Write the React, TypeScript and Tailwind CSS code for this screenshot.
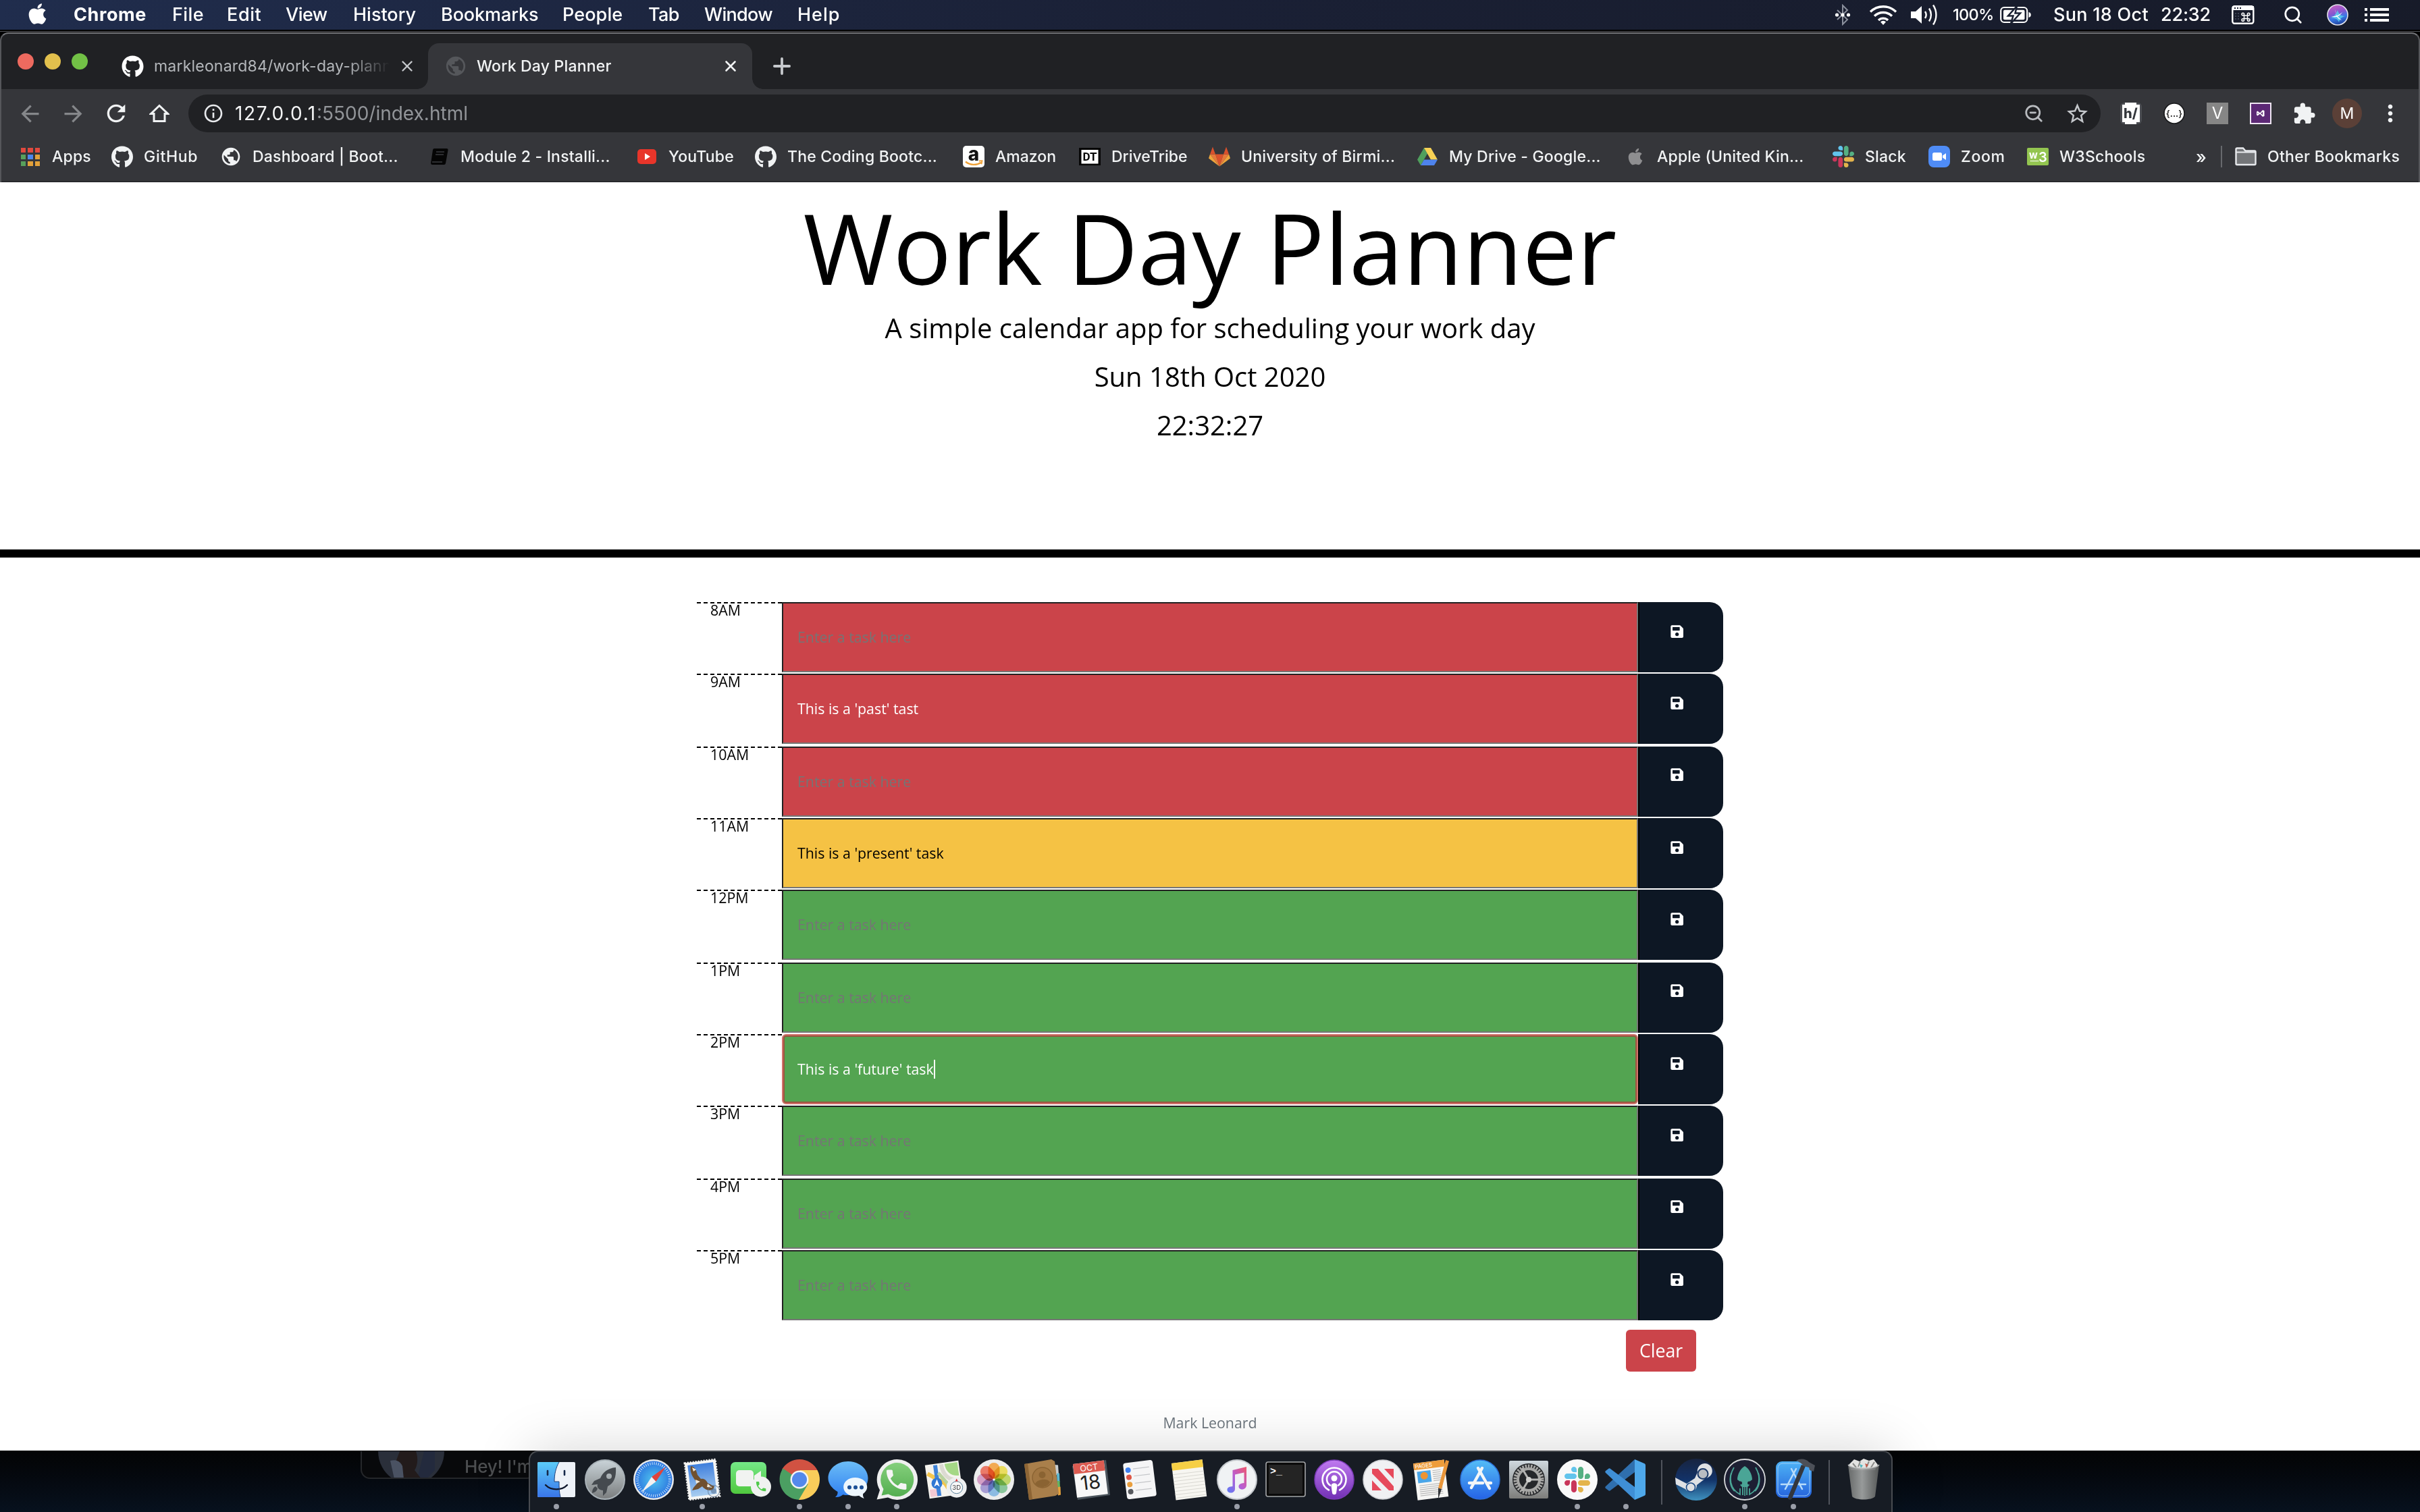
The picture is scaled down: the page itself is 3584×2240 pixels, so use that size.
import type { ReactNode } from "react";
import { FaApple, FaGithub, FaSave } from "react-icons/fa";
import {
  MdArrowBack,
  MdArrowForward,
  MdExtension,
  MdInfoOutline,
  MdMoreVert,
  MdPublic,
  MdRefresh,
  MdStarBorder,
} from "react-icons/md";
import { Plus, Search, X, ZoomOut } from "lucide-react";

const PHONE =
  "M6.62 10.79c1.44 2.83 3.76 5.14 6.59 6.59l2.2-2.2c.27-.27.67-.36 1.02-.24 1.12.37 2.33.57 3.57.57.55 0 1 .45 1 1V20c0 .55-.45 1-1 1-9.39 0-17-7.61-17-17 0-.55.45-1 1-1h3.5c.55 0 1 .45 1 1 0 1.25.2 2.45.57 3.57.11.35.03.74-.25 1.02l-2.2 2.2z";

/* ---------- macOS menu bar ---------- */

const menus = [
  { label: "Chrome", cls: "w-[146px] font-bold tracking-[0.6px]" },
  { label: "File", cls: "w-[81px] tracking-[0.4px]" },
  { label: "Edit", cls: "w-[87px] tracking-[0.6px]" },
  { label: "View", cls: "w-[100px] tracking-[-0.5px]" },
  { label: "History", cls: "w-[130px]" },
  { label: "Bookmarks", cls: "w-[180px] tracking-[-0.1px]" },
  { label: "People", cls: "w-[127px] tracking-[0.1px]" },
  { label: "Tab", cls: "w-[83px] tracking-[-0.6px]" },
  { label: "Window", cls: "w-[138px] tracking-[-0.7px]" },
  { label: "Help", cls: "w-[90px] tracking-[1px]" },
];

function Bluetooth() {
  return (
    <svg width="24" height="32" viewBox="0 0 24 32" fill="none">
      <path d="M4 9 19 23 12 30V2l7 7L4 23" stroke="#8a8f9c" strokeWidth="2" />
      <circle cx="3.5" cy="16" r="2.6" fill="#fff" />
      <circle cx="12" cy="16" r="2.6" fill="#fff" />
      <circle cx="20.500" cy="16" r="2.6" fill="#fff" />
    </svg>
  );
}

function Wifi() {
  return (
    <svg width="42" height="32" viewBox="0 0 42 32" fill="none" stroke="#fff" strokeWidth="3.4">
      <path d="M2 11.500a27 27 0 0 1 38 0" />
      <path d="M8 17.800a18.500 18.500 0 0 1 26 0" />
      <path d="M14 24a10 10 0 0 1 14 0" />
      <path d="M21 31l-4-4.500a5.500 5.500 0 0 1 8 0z" fill="#fff" stroke="none" />
    </svg>
  );
}

function Volume() {
  return (
    <svg width="42" height="34" viewBox="0 0 42 34" fill="none" stroke="#fff" strokeWidth="2.4">
      <path d="M0 12h7l9-8v26l-9-8H0z" fill="#fff" stroke="none" />
      <path d="M21 12a9 9 0 0 1 0 10" />
      <path d="M27 7.500a17 17 0 0 1 0 19" />
      <path d="M33 2.500a26 26 0 0 1 0 29" />
    </svg>
  );
}

function Battery() {
  return (
    <svg width="46" height="26" viewBox="0 0 46 26">
      <rect x="1.200" y="2" width="39" height="22" rx="5" fill="none" stroke="#fff" strokeWidth="2.200" />
      <rect x="5" y="5.800" width="31.500" height="14.500" rx="2" fill="#fff" />
      <path d="M42.500 9v8c2.500-.6 3.300-2.200 3.300-4s-.8-3.400-3.300-4z" fill="#fff" />
      <path d="M25 0 12 14.500h7.500L16 26l14-15.500h-7.500z" fill="#fff" stroke="#1a2031" strokeWidth="2.500" />
    </svg>
  );
}

function WindowGlyph() {
  return (
    <svg width="34" height="28" viewBox="0 0 34 28">
      <rect x="1.300" y="1.300" width="31" height="25.400" rx="3" fill="none" stroke="#fff" strokeWidth="2.400" />
      <path d="M1 1h32v6H1z" fill="#fff" />
      <path d="M4 3h2v2H4zM8 3h2v2H8zM12 3h2v2h-2z" fill="#1a2031" />
      <path d="M6 11v12M10 11v12" stroke="#4b5263" strokeWidth="1.500" strokeDasharray="2 2" />
      <g fill="none" stroke="#fff" strokeWidth="1.500">
        <rect x="18.500" y="15" width="5" height="4.500" />
        <circle cx="16.800" cy="13" r="1.800" />
        <circle cx="25.200" cy="13" r="1.800" />
        <circle cx="16.800" cy="21.500" r="1.800" />
        <circle cx="25.200" cy="21.500" r="1.800" />
      </g>
    </svg>
  );
}

function Siri() {
  return (
    <svg width="32" height="32" viewBox="0 0 32 32">
      <defs>
        <linearGradient id="siri" x1="0.300" y1="0" x2="0.600" y2="1">
          <stop offset="0" stopColor="#c65fc0" />
          <stop offset=".4" stopColor="#8a55cf" />
          <stop offset=".65" stopColor="#3a7ae6" />
          <stop offset="1" stopColor="#1c3f9c" />
        </linearGradient>
      </defs>
      <circle cx="16" cy="16" r="15" fill="url(#siri)" stroke="#e4e6ee" strokeWidth="1.600" />
      <path d="M5 21c5-2 8-5 11-12 2 7 6 9 11 9-5 1-8 4-9 9-2-5-6-7-13-6z" fill="#58d5ee" fillOpacity=".8" />
      <path d="M13 8c-1 6 1 9 9 16-5-2-9-4-9-16zM6 18c7 1 11-1 17-6-4 6-9 9-17 6z" fill="#fff" />
    </svg>
  );
}

function MenuBar() {
  return (
    <div className="flex h-[44px] items-center bg-linear-to-r from-[#202d4d] via-[#1a2035] to-[#171b29] text-[27px] font-medium text-white">
      <div className="flex w-[109px] pb-1 pl-[38px]">
        <FaApple className="size-[35px]" />
      </div>
      {menus.map((m) => (
        <div key={m.label} className={m.cls}>
          {m.label}
        </div>
      ))}
      <div className="ml-auto flex items-center pr-[46px]">
        <div className="w-[51px]"><Bluetooth /></div>
        <div className="w-[62px]"><Wifi /></div>
        <div className="w-[62px]"><Volume /></div>
        <div className="w-[70px] text-[23.500px] tracking-[-0.7px]">100%</div>
        <div className="w-[79px]"><Battery /></div>
        <div className="w-[159px] tracking-[0.3px] whitespace-nowrap">Sun 18 Oct</div>
        <div className="w-[105px] tracking-[-0.2px]">22:32</div>
        <div className="w-[76px]"><WindowGlyph /></div>
        <div className="w-[65px]"><Search className="size-[30px]" strokeWidth={2.2} /></div>
        <div className="w-[56px]"><Siri /></div>
        <div className="flex w-[36px] flex-col gap-[4px]">
          {[0, 1, 2].map((i) => (
            <div key={i} className="flex gap-[4px]">
              <div className="size-[4px] bg-white" />
              <div className="h-[4px] w-[28px] bg-white" />
            </div>
          ))}
        </div>
      </div>
    </div>
  );
}

/* ---------- Browser chrome ---------- */

function TabStrip() {
  return (
    <div className="flex h-[82px] items-end pl-[24px] text-[23px]">
      <div className="flex gap-[16px] self-start pt-[29px]">
        <div className="size-[24px] rounded-full bg-[#ed6a5f]" />
        <div className="size-[24px] rounded-full bg-[#e2c04d]" />
        <div className="size-[24px] rounded-full bg-[#72c146]" />
      </div>
      <div className="ml-[30px] flex h-[68px] w-[474px] items-center pl-[20px]">
        <FaGithub className="size-[33px] shrink-0 text-white" />
        <div className="ml-[15px] w-[349px] shrink-0 overflow-hidden tracking-[0.2px] whitespace-nowrap text-[#b4b7bb] [mask-image:linear-gradient(90deg,#000_82%,transparent)]">
          markleonard84/work-day-planner
        </div>
        <X className="ml-[13px] size-[26px] shrink-0 text-[#c4c7cb]" strokeWidth={2.2} />
      </div>
      <div className="relative flex h-[68px] w-[480px] items-center rounded-t-[16px] bg-[#35363a] pl-[24px]">
        <div className="absolute bottom-0 left-[-16px] size-[16px] bg-[radial-gradient(circle_at_0_0,transparent_15.5px,#35363a_16px)]" />
        <div className="absolute right-[-16px] bottom-0 size-[16px] bg-[radial-gradient(circle_at_100%_0,transparent_15.5px,#35363a_16px)]" />
        <MdPublic className="size-[34px] text-[#55575b]" />
        <div className="ml-[14px] w-[363px] font-medium tracking-[0.2px] text-[#f1f3f4]">Work Day Planner</div>
        <X className="size-[26px] text-[#f1f3f4]" strokeWidth={2.4} />
      </div>
      <div className="ml-[25px] flex h-[68px] items-center">
        <Plus className="size-[38px] text-[#c6c9cd]" strokeWidth={2.4} />
      </div>
    </div>
  );
}

function ToolCell({ children }: { children: ReactNode }) {
  return <div className="flex w-[64px] shrink-0 items-center justify-center">{children}</div>;
}

function Toolbar() {
  return (
    <div className="flex h-[72px] items-center bg-[#35363a] pr-[10px] pl-[10px]">
      <ToolCell><MdArrowBack className="size-[39px] text-[#85878a]" /></ToolCell>
      <ToolCell><MdArrowForward className="size-[39px] text-[#85878a]" /></ToolCell>
      <ToolCell><MdRefresh className="size-[40px] text-[#f1f3f4]" /></ToolCell>
      <ToolCell>
        <svg width="30" height="30" viewBox="0 0 30 30" fill="none" stroke="#f1f3f4" strokeWidth="3">
          <path d="M2.500 15.500 15 3.500l12.500 12H23V26.500H7V15.500z" strokeLinejoin="miter" />
        </svg>
      </ToolCell>
      <div className="ml-[11px] flex h-[56px] w-[2832px] items-center rounded-full bg-[#202124] pr-[3px] pl-[21px]">
        <MdInfoOutline className="size-[32px] text-[#e8eaed]" />
        <div className="ml-[16px] flex-1 text-[28px]">
          <span className="tracking-[1.6px] text-[#f4f5f6]">127.0.0.1</span>
          <span className="text-[#929599]">:5500/index.html</span>
        </div>
        <ToolCell><ZoomOut className="size-[30px] text-[#b8bbbf]" strokeWidth={2.2} /></ToolCell>
        <ToolCell><MdStarBorder className="size-[37px] text-[#c4c7cb]" /></ToolCell>
      </div>
      <div className="w-[13px]" />
      <ToolCell>
        <svg width="32" height="32" viewBox="0 0 32 32">
          <rect width="32" height="32" rx="6" fill="#4b4d52" />
          <path d="M7 0h17v3h5v26h-5v3H7v-3H3V3h4z" fill="#fff" />
          <text x="5" y="23" fontSize="20" fontWeight="800" fontFamily="Inter" fill="#33363b">h/</text>
        </svg>
      </ToolCell>
      <ToolCell>
        <svg width="32" height="32" viewBox="0 0 32 32">
          <circle cx="16" cy="16" r="15" fill="#fff" stroke="#17181a" strokeWidth="1.600" />
          <text x="16" y="20.500" textAnchor="middle" fontSize="13" fontWeight="600" fontFamily="Inter" fill="#222">{"{...}"}</text>
        </svg>
      </ToolCell>
      <ToolCell>
        <div className="flex size-[32px] items-center justify-center bg-[#868686] text-[24px] text-white">V</div>
      </ToolCell>
      <ToolCell>
        <svg width="32" height="32" viewBox="0 0 32 32">
          <rect x="1" y="1" width="30" height="30" fill="#5c2875" stroke="#efe6f3" strokeWidth="2" />
          <path d="M10 13.500 11.500 12.500l3.500 2.800 4-4.300 2.500 1v8l-2.500 1-4-4.300-3.500 2.800L10 18.500zM11.500 14.800v2.400l1.300-1.200zM19 13.600 16.300 16 19 18.400z" fill="#fff" fillRule="evenodd" />
        </svg>
      </ToolCell>
      <ToolCell><MdExtension className="size-[35px] text-[#f1f3f4]" /></ToolCell>
      <ToolCell>
        <div className="flex size-[44px] items-center justify-center rounded-full bg-[#5b4037] text-[23px] text-white">M</div>
      </ToolCell>
      <ToolCell><MdMoreVert className="size-[40px] text-[#f1f3f4]" /></ToolCell>
    </div>
  );
}

function SlackMark({ size }: { size: number }) {
  return (
    <svg width={size} height={size} viewBox="0 0 122.8 122.8">
      <path fill="#c9365a" d="M25.800 77.600c0 7.100-5.800 12.900-12.900 12.900S0 84.700 0 77.600s5.800-12.900 12.900-12.900h12.900v12.900zm6.500 0c0-7.100 5.800-12.900 12.900-12.900s12.900 5.800 12.900 12.900v32.300c0 7.100-5.800 12.900-12.900 12.900s-12.900-5.800-12.900-12.900V77.600z" />
      <path fill="#62c4ec" d="M45.200 25.800c-7.100 0-12.900-5.800-12.900-12.900S38.100 0 45.200 0s12.900 5.800 12.900 12.900v12.900H45.200zm0 6.500c7.100 0 12.900 5.800 12.900 12.900s-5.800 12.900-12.900 12.900H12.900C5.800 58.100 0 52.300 0 45.200s5.800-12.900 12.900-12.900h32.300z" />
      <path fill="#55b083" d="M97 45.200c0-7.100 5.800-12.900 12.900-12.900s12.900 5.800 12.900 12.900-5.800 12.900-12.900 12.900H97V45.200zm-6.500 0c0 7.100-5.800 12.900-12.900 12.900s-12.900-5.800-12.900-12.900V12.900C64.700 5.800 70.500 0 77.600 0s12.900 5.800 12.900 12.900v32.300z" />
      <path fill="#e4b44c" d="M77.600 97c7.100 0 12.900 5.800 12.900 12.900s-5.800 12.900-12.900 12.900-12.900-5.800-12.900-12.900V97h12.900zm0-6.500c-7.100 0-12.900-5.800-12.900-12.900s5.800-12.900 12.900-12.900h32.300c7.100 0 12.900 5.800 12.900 12.900s-5.800 12.900-12.900 12.900H77.600z" />
    </svg>
  );
}

const appColors = ["#e0493e", "#e0493e", "#e0493e", "#58a05c", "#4d86ec", "#e2a13a", "#58a05c", "#e2a13a", "#e2a13a"];

const bookmarks: { label: string; cls: string; icon: ReactNode }[] = [
  {
    label: "Apps",
    cls: "w-[136px]",
    icon: (
      <div className="grid w-[28px] grid-cols-3 gap-[3px]">
        {appColors.map((c, i) => (
          <div key={i} className="h-[7px]" style={{ backgroundColor: c }} />
        ))}
      </div>
    ),
  },
  { label: "GitHub", cls: "w-[161px] tracking-[0.7px]", icon: <FaGithub className="size-[33px]" /> },
  { label: "Dashboard | Boot...", cls: "w-[308px]", icon: <MdPublic className="size-[34px]" /> },
  {
    label: "Module 2 - Installi...",
    cls: "w-[308px]",
    icon: (
      <svg width="32" height="32" viewBox="0 0 32 32">
        <path d="M9 4h18.500a2 2 0 0 1 2 2.500L26 26a2.500 2.500 0 0 1-2.500 2H6.500a2.500 2.500 0 0 1-2.300-3L7 6a2.500 2.500 0 0 1 2-2z" fill="#050505" />
        <path d="M12 9h12M11 13h12M6 24h15" stroke="#3a3b3f" strokeWidth="1.500" />
      </svg>
    ),
  },
  {
    label: "YouTube",
    cls: "w-[176px] tracking-[-0.1px]",
    icon: (
      <svg width="32" height="32" viewBox="0 0 32 32">
        <rect x="2" y="5" width="28" height="22" rx="5" fill="#e8352a" />
        <path d="m13 11 8 5-8 5z" fill="#fff" />
      </svg>
    ),
  },
  { label: "The Coding Bootc...", cls: "w-[308px]", icon: <FaGithub className="size-[33px]" /> },
  {
    label: "Amazon",
    cls: "w-[172px] tracking-[0px]",
    icon: (
      <svg width="32" height="32" viewBox="0 0 32 32">
        <rect width="32" height="32" rx="5" fill="#fff" />
        <text x="16" y="21.500" textAnchor="middle" fontSize="28" fontWeight="800" fontFamily="Inter" fill="#111">a</text>
        <path d="M4 23.500c7 5.500 16 5.800 23 1.200" fill="none" stroke="#f0a136" strokeWidth="2.400" />
        <path d="M24 22.500l4.500-.3-1 5" fill="none" stroke="#f0a136" strokeWidth="1.800" />
      </svg>
    ),
  },
  {
    label: "DriveTribe",
    cls: "w-[192px] tracking-[0px]",
    icon: (
      <svg width="32" height="32" viewBox="0 0 32 32">
        <rect y="3" width="32" height="26" fill="#060606" />
        <rect x="3.500" y="6" width="25" height="20.500" fill="#fff" />
        <text x="16" y="22.300" textAnchor="middle" fontSize="17" fontWeight="700" fontFamily="Roboto" fill="#060606">DT</text>
      </svg>
    ),
  },
  {
    label: "University of Birmi...",
    cls: "w-[308px] tracking-[0.1px]",
    icon: (
      <svg width="32" height="32" viewBox="0 0 32 32">
        <path d="m16 30.500 6-18H10z" fill="#d9512c" />
        <path d="M16 30.500 10 12.500H2zM16 30.500l6-18h8z" fill="#e8783a" />
        <path d="m2 12.500-2 6 16 12zM30 12.500l2 6-16 12z" fill="#eda53d" />
        <path d="M2 12.500h8L6 1.500zM30 12.500h-8l4-11z" fill="#d9512c" />
      </svg>
    ),
  },
  {
    label: "My Drive - Google...",
    cls: "w-[308px]",
    icon: (
      <svg width="32" height="32" viewBox="0 0 32 32">
        <path d="M11 3 1 20.500 6 29l10-17.500z" fill="#4f9f5d" />
        <path d="M11 3h10l10 17.500H21z" fill="#f7d155" />
        <path d="M6 29 11 20.500h20L26 29z" fill="#4e83ec" />
      </svg>
    ),
  },
  { label: "Apple (United Kin...", cls: "w-[308px]", icon: <FaApple className="size-[28px] text-[#8e8e90]" /> },
  { label: "Slack", cls: "w-[142px]", icon: <SlackMark size={32} /> },
  {
    label: "Zoom",
    cls: "w-[146px] tracking-[0.7px]",
    icon: (
      <svg width="32" height="32" viewBox="0 0 32 32">
        <rect width="32" height="32" rx="8" fill="#4f8cf6" />
        <rect x="6" y="10" width="14" height="12" rx="2.500" fill="#fff" />
        <path d="m21 14.500 5-3.500v10l-5-3.500z" fill="#fff" />
      </svg>
    ),
  },
  {
    label: "W3Schools",
    cls: "w-[180px]",
    icon: (
      <svg width="32" height="32" viewBox="0 0 32 32">
        <rect y="3" width="32" height="26" rx="2" fill="#93c550" />
        <text x="3" y="19" fontSize="15" fontWeight="700" fontFamily="Inter" fill="#fff">w</text>
        <text x="17" y="24" fontSize="20" fontWeight="600" fontFamily="Inter" fill="#fff">3</text>
        <path d="M5 22.500h12" stroke="#fff" strokeWidth="1.500" strokeDasharray="1.500 .6" />
      </svg>
    ),
  },
];

function BookmarksBar() {
  return (
    <div className="h-[66px] border-b-2 border-[#28292c] bg-[#35363a]">
      <div className="flex h-[56px] items-center pl-[27px] text-[23px] font-medium text-[#f1f3f4]">
        {bookmarks.map((b) => (
          <div key={b.label} className={`flex items-center tracking-[0.2px] whitespace-nowrap ${b.cls}`}>
            <div className="flex w-[32px] items-center justify-center">{b.icon}</div>
            <div className="ml-[16px]">{b.label}</div>
          </div>
        ))}
        <div className="ml-auto w-[37px] text-[26px]">»</div>
        <div className="h-[32px] w-[2px] bg-[#67696d]" />
        <svg className="ml-[19px]" width="32" height="28" viewBox="0 0 32 28">
          <path d="M1.500 3a1.500 1.500 0 0 1 1.500-1.500h9l3.500 4H29A1.500 1.500 0 0 1 30.500 7v17.500A1.500 1.500 0 0 1 29 26H3a1.500 1.500 0 0 1-1.500-1.500z" fill="#747679" stroke="#e8eaed" strokeWidth="2.400" />
          <path d="M2 7.500h28" stroke="#e8eaed" strokeWidth="2" />
        </svg>
        <div className="ml-[16px] w-[224px] tracking-[0.3px] whitespace-nowrap">Other Bookmarks</div>
      </div>
    </div>
  );
}

/* ---------- Planner page ---------- */

const PAST = "bg-[#cb444a] text-white";
const PRESENT = "bg-[#f5c244] text-black";
const FUTURE = "bg-[#53a451] text-white";

const slots = [
  { hour: "8AM", tone: PAST, gap: "mb-[2px]", icon: "pt-[33px]" },
  { hour: "9AM", tone: PAST, text: "This is a 'past' tast", gap: "mb-[4px]", icon: "pt-[33px]" },
  { hour: "10AM", tone: PAST, gap: "mb-[2px]", icon: "pt-[31px]" },
  { hour: "11AM", tone: PRESENT, text: "This is a 'present' task", gap: "mb-[2px]", icon: "pt-[33px]" },
  { hour: "12PM", tone: FUTURE, gap: "mb-[4px]", icon: "pt-[33px]" },
  { hour: "1PM", tone: FUTURE, gap: "mb-[2px]", icon: "pt-[31px]" },
  { hour: "2PM", tone: FUTURE, text: "This is a 'future' task", focus: true, gap: "mb-[2px]", icon: "pt-[33px]" },
  { hour: "3PM", tone: FUTURE, gap: "mb-[4px]", icon: "pt-[33px]" },
  { hour: "4PM", tone: FUTURE, gap: "mb-[2px]", icon: "pt-[31px]" },
  { hour: "5PM", tone: FUTURE, gap: "mb-0", icon: "pt-[33px]" },
];

function SlotRow({ slot }: { slot: (typeof slots)[number] }) {
  const edge = slot.focus
    ? "rounded-[6px] border-[#d2726b] shadow-[inset_0_0_0_2px_#9b5540]"
    : "border-t-[#212121] border-r-[#767676] border-b-[#767676] border-l-[#212121]";
  return (
    <div className={`flex h-[104px] ${slot.gap}`}>
      <div className="w-[126px] bg-[repeating-linear-gradient(90deg,#000_0_6px,#fff_6px_10px)] bg-[length:100%_2px] bg-no-repeat pl-[20px] leading-[24px] text-black">
        {slot.hour}
      </div>
      <div className={`flex w-[1268px] items-center border-2 pl-[21px] ${edge} ${slot.tone}`}>
        {slot.text ? <span>{slot.text}</span> : <span className="text-[#757575]">Enter a task here</span>}
        {slot.focus && <div className="h-[28px] w-[2px] bg-white" />}
      </div>
      <div className={`flex w-[126px] justify-center rounded-r-[20px] border-l-2 border-black bg-[#0d1724] pr-[13px] ${slot.icon}`}>
        <FaSave className="size-[21.330px] text-white" />
      </div>
    </div>
  );
}

function PlannerPage() {
  return (
    <div className="flex h-[1880px] flex-col items-center bg-white font-['Open_Sans',sans-serif] text-black">
      <div className="flex h-[556px] w-full flex-col items-center border-b-[12px] border-black pt-[10px]">
        <h1 className="mb-[4px] text-[144px] leading-[172px]">Work Day Planner</h1>
        <p className="mb-[12px] text-[40px] leading-[60px]">A simple calendar app for scheduling your work day</p>
        <p className="mb-[12px] text-[40px] leading-[60px]">Sun 18th Oct 2020</p>
        <p className="text-[40px] leading-[60px]">22:32:27</p>
      </div>
      <div className="mt-[66px] flex w-[1520px] flex-col text-[21.330px]">
        {slots.map((s) => (
          <SlotRow key={s.hour} slot={s} />
        ))}
        <button className="mt-[14px] mr-[40px] h-[62px] w-[104px] self-end rounded-[6px] bg-[#cb444a] text-[26.670px] text-white">
          Clear
        </button>
      </div>
      <div className="mt-[60px] text-[21.330px] leading-[32px] text-[#6c757d]">Mark Leonard</div>
    </div>
  );
}

/* ---------- Dock ---------- */

function Icon({ children }: { children: ReactNode }) {
  return (
    <svg width="72" height="72" viewBox="0 0 72 72">
      {children}
    </svg>
  );
}

const petals = ["#f2a03d", "#e9d94b", "#b9d35a", "#7cc08f", "#7fb4e0", "#9d92cf", "#cf94c0", "#ea6a55"];

const apps: { name: string; running?: boolean; art: ReactNode }[] = [
  {
    name: "finder",
    running: true,
    art: (
      <Icon>
        <defs>
          <linearGradient id="fin" x1="0" y1="0" x2="0" y2="1">
            <stop offset="0" stopColor="#5bcbf8" />
            <stop offset="1" stopColor="#3a76ea" />
          </linearGradient>
        </defs>
        <rect x="8" y="10" width="56" height="52" rx="2" fill="#eef2f8" />
        <path d="M10 10h30c-5 9-7 18-7 29h7c0 8 0 15 2 23H10a2 2 0 0 1-2-2V12c0-1 1-2 2-2z" fill="url(#fin)" />
        <path d="M23 23v6M48 23v6" stroke="#15284a" strokeWidth="2.600" strokeLinecap="round" />
        <path d="M20 44c8 8.500 24 8.500 32 0" fill="none" stroke="#10182c" strokeWidth="2.400" strokeLinecap="round" />
        <path d="M40 10c-5 9-7 18-7 29h7c0 8 0 15 2 23" fill="none" stroke="#1d3f79" strokeWidth="1" />
      </Icon>
    ),
  },
  {
    name: "launchpad",
    art: (
      <Icon>
        <defs>
          <linearGradient id="lp" x1="0" y1="0" x2="0" y2="1">
            <stop offset="0" stopColor="#c9d3d8" />
            <stop offset="1" stopColor="#7a7d7e" />
          </linearGradient>
        </defs>
        <circle cx="36" cy="36" r="29" fill="url(#lp)" stroke="#a9b2b8" strokeWidth="2" />
        <path fillRule="evenodd" d="M52 18c-12 1-19 7-23 16l-9 4-4 6 9-1c-1 3 0 5 2 7 2 1 4 2 6 2v8l5-5 2-9c9-5 13-13 12-28zM42 27a4 4 0 1 1 0 8 4 4 0 0 1 0-8z" fill="#454a4f" />
        <path d="M22 46c-4 2-5 6-5 10 4-1 7-3 8-7z" fill="#454a4f" />
      </Icon>
    ),
  },
  {
    name: "safari",
    art: (
      <Icon>
        <defs>
          <radialGradient id="saf">
            <stop offset="0" stopColor="#4fc4ee" />
            <stop offset="1" stopColor="#2b74e0" />
          </radialGradient>
        </defs>
        <circle cx="36" cy="36" r="30" fill="#e6e8ea" />
        <circle cx="36" cy="36" r="27.500" fill="url(#saf)" />
        <circle cx="36" cy="36" r="24" fill="none" stroke="#dff1fc" strokeWidth="4" strokeDasharray=".9 2.240" />
        <path d="M54 17 33 32l6.500 7z" fill="#e0433c" />
        <path d="M18 55l15-23 6.500 7z" fill="#f2f2f2" />
      </Icon>
    ),
  },
  {
    name: "mail",
    running: true,
    art: (
      <Icon>
        <defs>
          <linearGradient id="mail" x1="0" y1="0" x2="0" y2="1">
            <stop offset="0" stopColor="#3f7fdc" />
            <stop offset="1" stopColor="#a8cdf0" />
          </linearGradient>
        </defs>
        <g transform="rotate(-7 36 36)">
          <rect x="13" y="8.500" width="46" height="55" fill="#f6f6f4" />
          <rect x="13" y="8.500" width="46" height="55" fill="none" stroke="#f6f6f4" strokeWidth="2.600" strokeDasharray="2 2" />
          <rect x="17" y="12.500" width="38" height="47" fill="url(#mail)" />
        </g>
        <path d="M19 16c5 0 8 5 10 13l5 6c5-1 8 2 10 6l10 5-2 5c-7 2-12 0-16-5l-6 4-9 2 2-4 6-7c-7-8-12-16-10-25z" fill="#70502f" />
        <path d="M21 18l6 3-4 3zM26 36l7 3-6 3zM44 42l7 6-8-1z" fill="#efe7d8" />
        <circle cx="53" cy="53" r="8.500" fill="none" stroke="#5b7594" strokeOpacity=".6" strokeWidth="1.300" />
        <circle cx="53" cy="53" r="4" fill="#5b7594" fillOpacity=".6" />
      </Icon>
    ),
  },
  {
    name: "facetime",
    art: (
      <Icon>
        <defs>
          <linearGradient id="ft" x1="0" y1="0" x2="0" y2="1">
            <stop offset="0" stopColor="#74e887" />
            <stop offset="1" stopColor="#50c83e" />
          </linearGradient>
        </defs>
        <rect x="6" y="10" width="53" height="47" rx="7" fill="url(#ft)" />
        <rect x="14" y="22" width="26" height="24" rx="5" fill="#f1f3f1" />
        <path d="m41 30 10-7v22l-10-7z" fill="#f1f3f1" />
        <circle cx="51" cy="46.500" r="15" fill="#f0f2f0" />
        <path d={PHONE} fill="#4fc94a" transform="translate(41.500 36.500) scale(.8)" />
      </Icon>
    ),
  },
  {
    name: "chrome",
    running: true,
    art: (
      <Icon>
        <path d="M36 36 10 21a30 30 0 0 1 52.500 1H36z" fill="#d15242" />
        <path d="M36 36 11.500 19.500A30 30 0 0 0 36 66l13-22.500z" fill="#4b9f62" />
        <path d="M36 22h26.500A30 30 0 0 1 35 66l13.500-23z" fill="#f9cd5a" />
        <circle cx="36" cy="36" r="13.500" fill="#f3f3f3" />
        <circle cx="36" cy="36" r="11" fill="#5489ec" />
      </Icon>
    ),
  },
  {
    name: "messages",
    running: true,
    art: (
      <Icon>
        <defs>
          <linearGradient id="msg" x1="0" y1="0" x2="0" y2="1">
            <stop offset="0" stopColor="#6cbdf6" />
            <stop offset="1" stopColor="#2f7ff2" />
          </linearGradient>
        </defs>
        <path d="M36 9c16.500 0 29.500 11 29.500 25S52.500 59 36 59c-3 0-5 0-7.500-.8-3 2.500-6.500 4.300-11.500 3.800 2.500-2 4-4.500 3.500-8C12 49 6.500 42 6.500 34 6.500 20 19.500 9 36 9z" fill="url(#msg)" />
        <path d="M46.700 33c10 0 17.500 6 17.500 14 0 4-2.500 7.500-6 10-.5 2.500 0 4 1.500 7-3.500-1-5.500-2.500-7.500-4.200-13 2.700-23-3.800-23-12.800 0-8 7.500-14 17.500-14z" fill="#eef6fd" />
        <circle cx="38" cy="47.500" r="3" fill="#1c4f96" />
        <circle cx="47" cy="47.500" r="3" fill="#1c4f96" />
        <circle cx="56" cy="47.500" r="3" fill="#1c4f96" />
      </Icon>
    ),
  },
  {
    name: "whatsapp",
    running: true,
    art: (
      <Icon>
        <defs>
          <linearGradient id="wa" x1="0" y1="0" x2="0" y2="1">
            <stop offset="0" stopColor="#84cf7c" />
            <stop offset="1" stopColor="#54ae50" />
          </linearGradient>
        </defs>
        <path d="M36 6a30 30 0 1 1-13 56.500L6.500 65.500 11 51.500A30 30 0 0 1 36 6z" fill="#efefef" />
        <path d="M36 11a25 25 0 1 1-12.500 46.500L13.500 59.500l3-9.500A25 25 0 0 1 36 11z" fill="url(#wa)" />
        <path d={PHONE} fill="#f5f5f5" transform="translate(16 16.500) scale(1.640)" />
      </Icon>
    ),
  },
  {
    name: "maps",
    art: (
      <Icon>
        <g transform="rotate(-8 34 36)">
          <rect x="9" y="11" width="50" height="50" fill="#f5f4ef" />
          <path d="M38 13h19v20c-11 0-19-8-19-20z" fill="#a5d886" />
          <path d="M11 48h14v11H11z" fill="#f3c9d3" />
          <path d="M11 24 35 42l8 17" stroke="#f5c64d" strokeWidth="6" fill="none" />
          <path d="M24 13v46" stroke="#3f83d8" strokeWidth="6" />
          <path d="M33 13c0 18 10 26 24 27" stroke="#dcdad2" strokeWidth="6" fill="none" />
          <path d="M27 25 49 59" stroke="#b9d3a0" strokeWidth="5" />
        </g>
        <circle cx="23.500" cy="41.500" r="8" fill="#2f78d4" />
        <path d="m23.500 35.500 4.200 11-4.200-3-4.200 3z" fill="#fff" />
        <circle cx="52.700" cy="47.700" r="15" fill="#eef0f1" />
        <circle cx="52.700" cy="47.700" r="9" fill="#f8f9fa" stroke="#59829c" strokeWidth="1" />
        <path d="m52.700 34.500 2 4h-4z" fill="#d33" />
        <text x="52.700" y="51.300" textAnchor="middle" fontSize="9.500" fontFamily="Inter" fill="#333">3D</text>
      </Icon>
    ),
  },
  {
    name: "photos",
    art: (
      <Icon>
        <circle cx="36" cy="36" r="30" fill="#ececec" />
        <g className="isolate">
          {petals.map((c, i) => (
            <rect key={c} x="27.500" y="11" width="17" height="24" rx="8.500" fill={c} fillOpacity=".88" className="mix-blend-multiply" transform={`rotate(${i * 45} 36 36)`} />
          ))}
        </g>
        <circle cx="36" cy="36" r="1.500" fill="#fff" />
      </Icon>
    ),
  },
  {
    name: "contacts",
    art: (
      <Icon>
        <path d="M54 14l5 .5 1 14-4 1z" fill="#c9cdd0" />
        <path d="M57 27l4-.5.5 13-4 1z" fill="#5fb7cf" />
        <path d="M58 38l3.500 0 .5 10-4 1z" fill="#63b561" />
        <path d="M59 47l3.500-.5.5 12-4 1z" fill="#e5a23c" />
        <path d="m9 13 40-7 5 3 6 48-5 3-39 6z" fill="#a97f4b" />
        <path d="m9 13 5-1 7 53-5 .8z" fill="#8d6535" />
        <circle cx="36" cy="33" r="15" fill="#a17642" stroke="#8a6332" strokeWidth="1.400" />
        <circle cx="35.500" cy="29" r="5" fill="#8a6332" />
        <path d="M25 42c3-7 19-9 22-2-4 8-16 10-22 2z" fill="#8a6332" />
      </Icon>
    ),
  },
  {
    name: "calendar",
    art: (
      <Icon>
        <path d="m8 16 50-9 6 52-48 7z" fill="#4b545c" />
        <g transform="rotate(-7 36 36)">
          <rect x="12" y="10" width="46" height="50" fill="#f8f8f8" />
          <rect x="12" y="10" width="46" height="15" fill="#dc5b51" />
          <text x="35" y="22.500" textAnchor="middle" fontSize="12.500" fontFamily="Inter" fill="#fff">OCT</text>
          <text x="34.500" y="50" textAnchor="middle" fontSize="29" fontFamily="Inter" fill="#222">18</text>
        </g>
      </Icon>
    ),
  },
  {
    name: "reminders",
    art: (
      <Icon>
        <g transform="rotate(-7 36 36)">
          <rect x="14" y="9" width="44" height="54" rx="4" fill="#f5f5f6" />
          {["#3f80ee", "#dd5545", "#e99f3e", "#57595e"].map((c, i) => (
            <g key={c}>
              <circle cx="20.500" cy={20 + i * 10.7} r="4" fill={c} />
              <path d={`M28 ${19 + i * 10.7}h24`} stroke="#c4c6c9" strokeWidth="1.200" />
            </g>
          ))}
        </g>
      </Icon>
    ),
  },
  {
    name: "notes",
    art: (
      <Icon>
        <g transform="rotate(-7 36 36)">
          <rect x="14" y="9" width="46" height="55" fill="#f7f6f1" />
          <rect x="14" y="9" width="46" height="11" fill="#f6cf45" />
          {[26, 31, 36, 41, 46, 51, 56, 61].map((y) => (
            <path key={y} d={`M14 ${y}h46`} stroke="#d9d8d2" strokeWidth="1" />
          ))}
        </g>
      </Icon>
    ),
  },
  {
    name: "music",
    running: true,
    art: (
      <Icon>
        <defs>
          <linearGradient id="mus" x1="1" y1="0" x2="0" y2="1">
            <stop offset="0" stopColor="#f0566b" />
            <stop offset=".5" stopColor="#b95ed2" />
            <stop offset="1" stopColor="#5a7bf6" />
          </linearGradient>
        </defs>
        <circle cx="36" cy="36" r="29" fill="#f0f2f4" stroke="#c3c7cc" strokeWidth="2" />
        <path d="M29.500 22 50 17v27c0 4-3 6.500-6.500 6.500S38 48 38.500 45.500s3-4 8-4.500V25.500L33 28.500v21c0 4-3 6-6 6s-6-2-5.500-5c.5-3 3-4 8-4.500z" fill="url(#mus)" />
      </Icon>
    ),
  },
  {
    name: "terminal",
    art: (
      <Icon>
        <rect x="7" y="10" width="58" height="51" rx="3" fill="#0a0a0a" stroke="#a4a6a8" strokeWidth="1.600" />
        <rect x="11" y="14" width="50" height="43" fill="#242424" />
        <text x="13" y="28" fontSize="15" fontWeight="700" fontFamily="Liberation Mono" fill="#fff">{">_"}</text>
      </Icon>
    ),
  },
  {
    name: "podcasts",
    art: (
      <Icon>
        <defs>
          <linearGradient id="pod" x1="0" y1="0" x2="0" y2="1">
            <stop offset="0" stopColor="#c07af0" />
            <stop offset="1" stopColor="#7130b4" />
          </linearGradient>
        </defs>
        <circle cx="36" cy="36" r="29" fill="url(#pod)" stroke="#7b3bb8" strokeWidth="1.600" />
        <g fill="none" stroke="#fff" strokeWidth="2.600" strokeLinecap="round">
          <path d="M28 51.500a17.500 17.500 0 1 1 16 0" />
          <path d="M30 44.500a11 11 0 1 1 12 0" />
        </g>
        <circle cx="36" cy="34" r="4.500" fill="#fff" />
        <path d="M31.500 45c0-5 9-5 9 0L39 56c-.8 3-5.200 3-6 0z" fill="#fff" />
      </Icon>
    ),
  },
  {
    name: "news",
    art: (
      <Icon>
        <circle cx="36" cy="36" r="29" fill="#f0f1f3" stroke="#cdd0d4" strokeWidth="1.600" />
        <path d="M20 22v-2h9l23 26v6h-7L20 27zM38 20h14v15zM20 37l14 15H20z" fill="#e64a5c" />
      </Icon>
    ),
  },
  {
    name: "pages",
    art: (
      <Icon>
        <g transform="rotate(-7 36 36)">
          <rect x="12" y="9" width="46" height="55" fill="#f6f6f4" />
          <rect x="12" y="9" width="46" height="10" fill="#ee9d3b" />
          <text x="14" y="17" fontSize="8" fontFamily="Inter" fill="#fff">PAGES</text>
          <rect x="16" y="22" width="20" height="17" fill="#4aa6e8" />
          <circle cx="26" cy="29" r="5.500" fill="#ee9432" />
          {[23, 26, 29, 32, 35, 38].map((y) => (
            <path key={y} d={`M39 ${y}h12`} stroke="#b9b9b9" strokeWidth="1.200" />
          ))}
          {[43, 46, 49, 52, 55, 58].map((y) => (
            <path key={y} d={`M17 ${y}h34`} stroke="#b9b9b9" strokeWidth="1.200" />
          ))}
        </g>
        <path d="m57 7 5 1.500L51 50l-5-1.500z" fill="#e9963a" />
        <path d="m46 48.500 5 1.500-5 15z" fill="#33363a" />
      </Icon>
    ),
  },
  {
    name: "appstore",
    art: (
      <Icon>
        <defs>
          <linearGradient id="as" x1="0" y1="0" x2="0" y2="1">
            <stop offset="0" stopColor="#54bdf7" />
            <stop offset="1" stopColor="#2563e6" />
          </linearGradient>
        </defs>
        <circle cx="36" cy="36" r="29" fill="url(#as)" stroke="#2c6fd8" strokeWidth="1.600" />
        <g stroke="#f4f6f8" strokeWidth="4.400" strokeLinecap="round">
          <path d="M33 19 50 49" />
          <path d="M39 19 23 48" />
          <path d="M20 41h20M48 41h4" />
        </g>
      </Icon>
    ),
  },
  {
    name: "settings",
    art: (
      <Icon>
        <defs>
          <linearGradient id="set" x1="0" y1="0" x2="0" y2="1">
            <stop offset="0" stopColor="#cfd8de" />
            <stop offset="1" stopColor="#7d7d7b" />
          </linearGradient>
        </defs>
        <rect x="7" y="8" width="58" height="56" rx="2" fill="url(#set)" />
        <circle cx="36" cy="36" r="24" fill="#25272a" />
        <circle cx="36" cy="36" r="20" fill="none" stroke="#a7a7a5" strokeWidth="5" strokeDasharray="2.600 1.600" />
        <circle cx="36" cy="36" r="16" fill="none" stroke="#a7a7a5" strokeWidth="4" />
        <path d="M36 36H55M36 36 26 19M36 36 26 53" stroke="#b3b3b1" strokeWidth="3" />
        <circle cx="36" cy="36" r="4" fill="#d0d0ce" />
      </Icon>
    ),
  },
  {
    name: "slack",
    running: true,
    art: (
      <Icon>
        <circle cx="36" cy="36" r="30" fill="#f9f9f9" />
        <g transform="translate(17 17)">
          <SlackMark size={38} />
        </g>
      </Icon>
    ),
  },
  {
    name: "vscode",
    running: true,
    art: (
      <Icon>
        <path d="M6 46c-1 1-1 2 0 3l4 3c1 1 2 1 3 0l36-27V6z" fill="#2f6fae" />
        <path d="M6 26c-1-1-1-2 0-3l4-3c1-1 2-1 3 0l36 27v19z" fill="#3f8fd6" />
        <path d="M49 6l14 6c1.500.7 2 1.500 2 3v42c0 1.500-.5 2.500-2 3l-14 6z" fill="#4ea8ea" />
      </Icon>
    ),
  },
];

const extras: { name: string; running?: boolean; art: ReactNode }[] = [
  {
    name: "steam",
    art: (
      <Icon>
        <defs>
          <linearGradient id="stm" x1="0" y1="0" x2="0" y2="1">
            <stop offset="0" stopColor="#182440" />
            <stop offset=".5" stopColor="#123268" />
            <stop offset="1" stopColor="#3f92c0" />
          </linearGradient>
        </defs>
        <circle cx="36" cy="36" r="31" fill="url(#stm)" />
        <path d="M5 33 22 42l12-8 4-9a11 11 0 1 1 12 9L37 44a9.500 9.500 0 0 1-17 6L6 43z" fill="#dfe1e4" />
        <circle cx="46" cy="27.500" r="7.500" fill="#b9bcc2" stroke="#1b3868" strokeWidth="2" />
        <circle cx="28" cy="47.500" r="6.500" fill="none" stroke="#1b4a86" strokeWidth="1.600" />
      </Icon>
    ),
  },
  {
    name: "gitkraken",
    running: true,
    art: (
      <Icon>
        <circle cx="36" cy="36" r="30" fill="#1d1f33" stroke="#d8dadc" strokeWidth="1.800" />
        <path d="M36 16c6 3 11 12 11 20l-4 3v5l-3 3v12h-1.800V47h-1.400v13h-1.600V47h-1.400v12H32V47l-3-3v-5l-4-3c0-8 5-17 11-20z" fill="#4aa596" />
        <g fill="none" stroke="#4aa596" strokeWidth="1.800">
          <path d="M20 18c-9 15-6 32 9 40V49" />
          <path d="M52 18c9 15 6 32-9 40V49" />
          <path d="M16 26c-4 13 0 23 5 27M56 26c4 13 0 23-5 27" />
        </g>
        <circle cx="29.500" cy="41" r="2.500" fill="#1d1f33" />
        <circle cx="42.500" cy="41" r="2.500" fill="#1d1f33" />
      </Icon>
    ),
  },
  {
    name: "xcode",
    running: true,
    art: (
      <Icon>
        <defs>
          <linearGradient id="xc" x1="0" y1="0" x2="0" y2="1">
            <stop offset="0" stopColor="#4db2f5" />
            <stop offset="1" stopColor="#2563dd" />
          </linearGradient>
        </defs>
        <rect x="10" y="9" width="53" height="54" rx="9" fill="url(#xc)" />
        <rect x="13" y="12" width="47" height="48" rx="7" fill="none" stroke="#9ccdf8" strokeWidth="1" />
        <g fill="none" stroke="#b8dcfa" strokeWidth="2.500" strokeLinecap="round">
          <path d="M33 20 49 50M40 20 24 50M18 43h36" />
        </g>
        <path d="m48 14 6 2-20 48c-2 3-7 2-6-2z" fill="#33363d" />
        <path d="M40 8c6-4 15-3 19 2l9 5-2 9-6-2-1-4-8-2c-2-4-6-6-11-8z" fill="#4c5058" />
      </Icon>
    ),
  },
];

const trash = (
  <Icon>
    <defs>
      <linearGradient id="tr" x1="0" y1="0" x2="1" y2="0">
        <stop offset="0" stopColor="#6e7070" />
        <stop offset=".45" stopColor="#a3a5a5" />
        <stop offset="1" stopColor="#5c5e5e" />
      </linearGradient>
    </defs>
    <path d="M14 14l8-8 8 3 6-4 8 3 7-2 6 8-4 8H17z" fill="#e4e4e2" />
    <path d="M20 12l5 6M31 9l-3 8M44 9l-4 9M52 10l-5 8" stroke="#8b8b89" strokeWidth="2" />
    <path d="m30 13 5 2-3 4z" fill="#4fb7c0" />
    <path d="m38 12 5 2-3 4z" fill="#c65a4a" />
    <path d="M13 14c6 7 40 7 46 0l-6 47c-5 6-29 6-34 0z" fill="url(#tr)" fillOpacity=".92" />
    <path d="M13 14c6 7 40 7 46 0" fill="none" stroke="#bcbebe" strokeWidth="1.400" />
  </Icon>
);

function DockCell({ running, children }: { running?: boolean; children: ReactNode }) {
  return (
    <div className="flex w-[72px] flex-col items-center">
      {children}
      {running && <div className="size-[8px] rounded-full bg-[#9a9ea8]" />}
    </div>
  );
}

function Dock() {
  return (
    <div className="relative flex h-[100px] w-[2020px] rounded-t-[14px] border-[2.500px] border-b-0 border-[#484b50] bg-[#171c24] pt-[4.500px] pl-[3px] shadow-[0_0_80px_rgba(0,0,0,0.17)]">
      {apps.map((a) => (
        <DockCell key={a.name} running={a.running}>
          {a.art}
        </DockCell>
      ))}
      <div className="mt-[7px] mr-[14px] ml-[16px] h-[66px] w-[2px] bg-[#50545c]" />
      {extras.map((a) => (
        <DockCell key={a.name} running={a.running}>
          {a.art}
        </DockCell>
      ))}
      <div className="mt-[7px] mr-[14px] ml-[16px] h-[66px] w-[2px] bg-[#50545c]" />
      <DockCell>{trash}</DockCell>
    </div>
  );
}

export default function App() {
  return (
    <div className="flex h-[2240px] w-[3584px] flex-col overflow-hidden bg-black font-['Inter',sans-serif]">
      <MenuBar />
      <div className="mt-[2px] mb-px h-px bg-[#55565b]" />
      <div className="shrink-0 overflow-hidden rounded-t-[12px] border-x-2 border-t-2 border-x-[#55565a] border-t-[#737478] bg-[#202124]">
        <TabStrip />
        <Toolbar />
        <BookmarksBar />
      </div>
      <PlannerPage />
      <div className="-mt-px flex h-[91px] shrink-0 items-start bg-linear-to-b from-[#030405] to-[#07111e] pl-[534px]">
        <div className="mt-px -mr-[11px] flex h-[41px] w-[260px] overflow-hidden rounded-b-[14px] border-2 border-t-0 border-[#25272a] bg-[#08090b] pl-[24px]">
          <svg width="98" height="41" viewBox="0 0 98 41">
            <path d="M0 0h98a49 49 0 0 1-22 41H22A49 49 0 0 1 0 0z" fill="#2a2f3a" />
            <path d="M68 0h16v28l-12 13H58z" fill="#232a3d" />
            <path d="M32 0h24c4 12 2 22-2 28l10 13H38L26 16z" fill="#221b1b" />
            <path d="M18 14c8-2 14 0 18 8l2 19H24z" fill="#4a5262" />
          </svg>
          <div className="ml-[30px] text-[26px] leading-[46px] font-medium tracking-[-0.2px] whitespace-nowrap text-[#4c4e50]">Hey! I'm</div>
        </div>
        <Dock />
      </div>
    </div>
  );
}
